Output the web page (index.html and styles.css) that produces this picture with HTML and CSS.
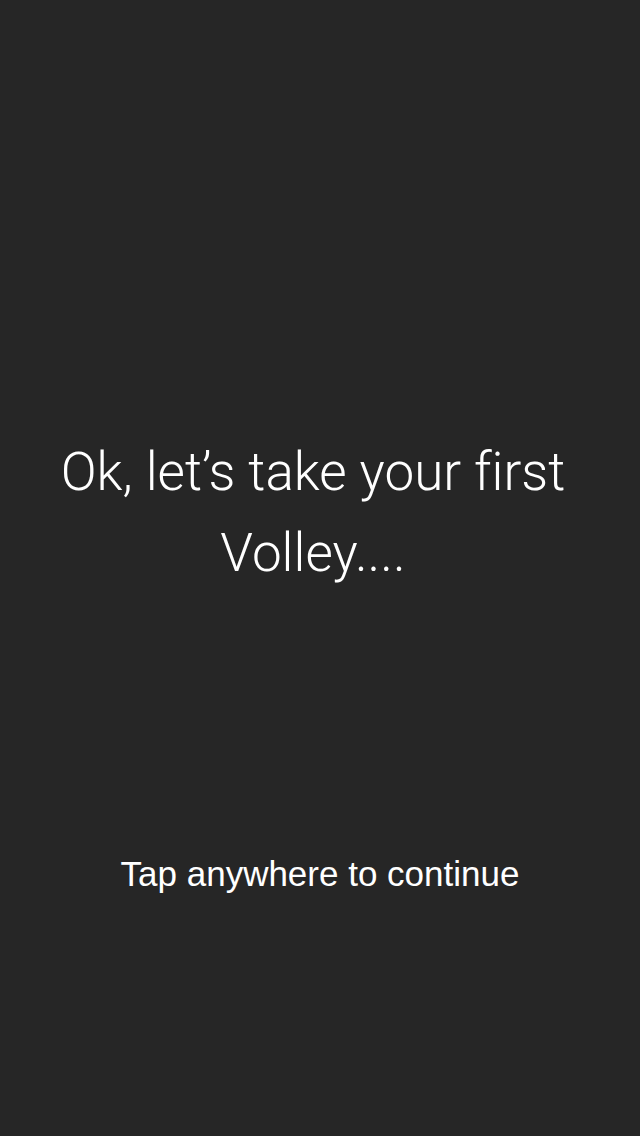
FILE: index.html
```html
<!DOCTYPE html>
<html>
<head>
<meta charset="utf-8">
<link rel="stylesheet" href="styles.css">
</head>
<body>
<main class="screen">
  <h1 class="title">Ok, let’s take your first Volley....</h1>
  <p class="hint">Tap anywhere to continue</p>
</main>
</body>
</html>
```
FILE: styles.css
```css
html, body {
  margin: 0;
  padding: 0;
  background: #262626;
}
.screen {
  width: 640px;
  height: 1136px;
  box-sizing: border-box;
  display: flex;
  flex-direction: column;
  align-items: center;
  color: #ffffff;
  padding-top: 432px;
}
.title {
  margin: 0;
  width: 526px;
  padding-right: 14px;
  text-align: center;
  font-family: Roboto, "Liberation Sans", sans-serif;
  font-weight: 300;
  font-size: 53px;
  line-height: 81px;
  font-variant-ligatures: none;
}
.hint {
  margin: 0;
  margin-top: 260px;
  font-family: "Liberation Sans", Arial, sans-serif;
  font-size: 35px;
  line-height: 40px;
}
```
